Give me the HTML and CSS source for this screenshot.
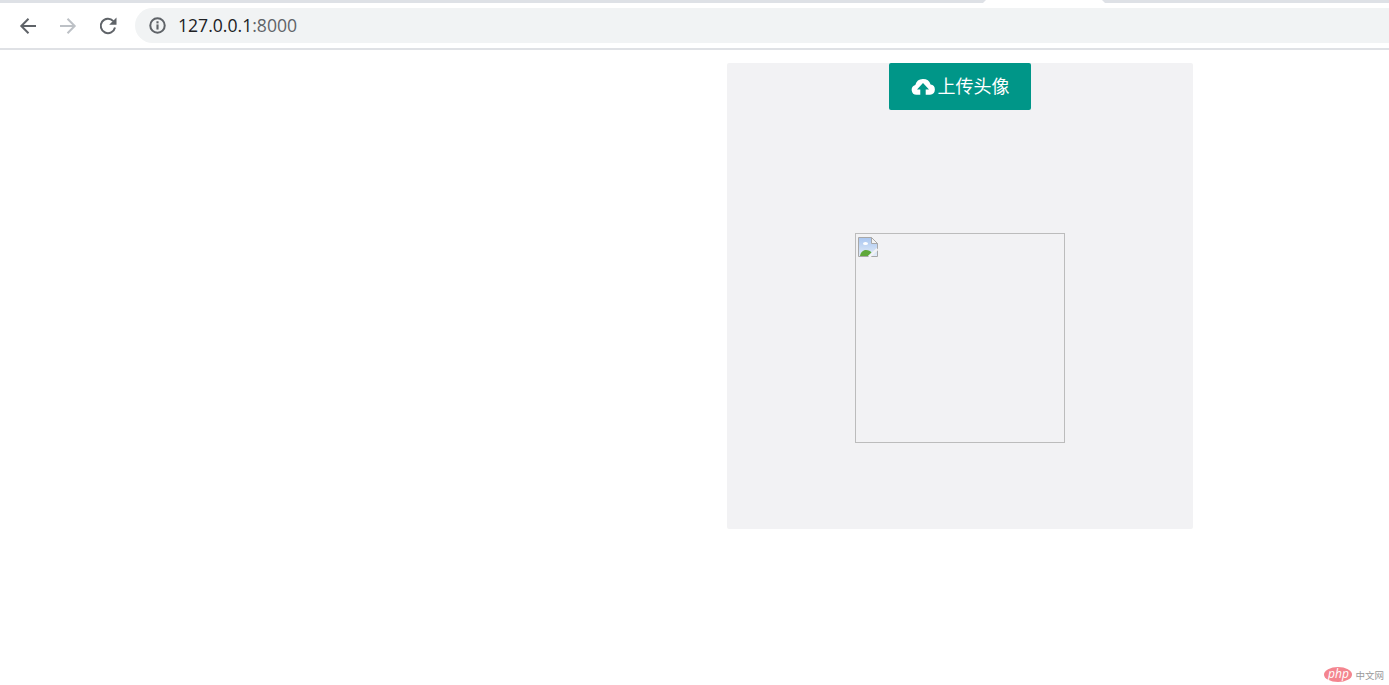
FILE: index.html
```html
<!DOCTYPE html>
<html lang="zh-CN">
<head>
  <meta charset="UTF-8" />
  <title>上传头像</title>
  <link rel="stylesheet" href="styles.css">
</head>
<body>
  <!-- browser chrome -->
  <header class="browser-bar">
    <div class="tab-strip">
      <div class="tab-active"></div>
    </div>
    <div class="toolbar">
      <svg class="nav-icon" viewBox="0 0 20 20"><path d="M18 10H3.500M10.500 2.800L3.300 10l7.200 7.200" fill="none" stroke="#5f6368" stroke-width="2"/></svg>
      <svg class="nav-icon" viewBox="0 0 20 20"><path d="M2 10h14.500M9.500 2.800l7.200 7.200-7.200 7.200" fill="none" stroke="#bdc1c6" stroke-width="2"/></svg>
      <svg class="nav-icon" viewBox="0 0 20 20"><path d="M17 11.500a7.200 7.200 0 1 1-1.700-6.400" fill="none" stroke="#5f6368" stroke-width="2"/><path d="M18.500 1.500v7.300h-7.300z" fill="#5f6368"/></svg>
      <div class="address">
        <svg class="info-icon" viewBox="0 0 16 16"><circle cx="8" cy="8" r="6.800" fill="none" stroke="#5f6368" stroke-width="1.900"/><rect x="7" y="7" width="2" height="4.800" fill="#5f6368"/><rect x="7" y="4" width="2" height="2" fill="#5f6368"/></svg>
        <span class="url">127.0.0.1<span class="url-port">:8000</span></span>
      </div>
    </div>
  </header>

  <main class="page">
    <div class="upload-panel">
      <button type="button" class="upload-btn">
        <svg class="cloud-icon" viewBox="0 0 24 17"><path d="M5.500 16.800A5 5 0 0 1 4.300 7a8 8 0 0 1 15.300-.500 5.200 5.200 0 0 1-.500 10.300h-4.400V11.500h3.300L12 5l-6 6.500h3.300v5.300z" fill="#fff"/></svg>
        <span class="upload-label">上传头像</span>
      </button>
      <div class="avatar">
        <!-- broken image placeholder -->
        <svg class="broken-icon" viewBox="0 0 20 20">
          <defs>
            <linearGradient id="sky" x1="0" y1="0" x2="0" y2="1">
              <stop offset="0" stop-color="#a9c6f0"/>
              <stop offset="1" stop-color="#e4edf8"/>
            </linearGradient>
          </defs>
          <path d="M.500.500h13l6 6v13H.500z" fill="url(#sky)" stroke="#a8a8a8"/>
          <path d="M13.500.500v6h6z" fill="#f4f4f4" stroke="#a8a8a8"/>
          <path d="M5 6.500a2.500 1.500 0 0 1 5 0 2.500 1.500 0 0 1-5 0z" fill="#fff"/>
          <path d="M2 19c.5-3.500 3-6 6-6 2.500 0 4.500 1.200 5.500 2.500L10 19z" fill="#5fa83a"/>
          <path d="M11 20l8.500-8" stroke="#f2f2f4" stroke-width="2.500"/>
        </svg>
      </div>
    </div>
  </main>

  <div class="watermark">
    <span class="php-badge">php</span>
    <span class="php-site">中文网</span>
  </div>
</body>
</html>
```

FILE: styles.css
```css
html, body {
  height: 100%;
}
body {
  margin: 0;
  background: white;
  font-family: "Open Sans", "Noto Sans CJK SC", sans-serif;
  overflow: hidden;
}
.browser-bar {
  height: 50px;
  box-sizing: border-box;
  border-bottom: 2px solid #dfe1e5;
}
.tab-strip {
  height: 3px;
  padding-left: 983px;
  background: #dee1e6;
}
.tab-active {
  width: 122px;
  height: 3px;
  background: white;
  clip-path: polygon(0 100%, 3px 0, calc(100% - 3px) 0, 100% 100%);
}
.toolbar {
  display: flex;
  align-items: center;
  height: 45px;
  padding-left: 18px;
}
.nav-icon {
  width: 20px;
  height: 20px;
  margin-right: 20px;
}
.address {
  display: flex;
  align-items: center;
  flex: 1;
  height: 35px;
  margin-left: -3px;
  padding-left: 14px;
  background: #f1f3f4;
  border-radius: 18px 0 0 18px;
}
.info-icon {
  width: 17px;
  height: 17px;
  margin-right: 12px;
}
.url {
  margin-bottom: 2px;
  font-size: 17.6px;
  color: #202124;
}
.url-port {
  color: #5f6368;
}
.page {
  padding: 13px 0 0 727px;
}
.upload-panel {
  display: flex;
  flex-direction: column;
  align-items: center;
  width: 466px;
  height: 466px;
  background: #f2f2f4;
  border-radius: 2px;
}
.upload-btn {
  display: flex;
  align-items: center;
  justify-content: center;
  gap: 3px;
  width: 142px;
  height: 47px;
  padding: 0;
  background: #009688;
  color: white;
  border: none;
  border-radius: 2px;
  font-family: "Noto Sans CJK SC", sans-serif;
  font-size: 18px;
}
.upload-label {
  margin-bottom: 4px;
}
.cloud-icon {
  width: 24px;
  height: 17px;
}
.avatar {
  width: 210px;
  height: 210px;
  box-sizing: border-box;
  margin-top: 123px;
  padding: 3px 0 0 2px;
  border: 1px solid #bcbcbc;
}
.broken-icon {
  display: block;
  width: 20px;
  height: 20px;
}
.watermark {
  position: absolute;
  right: 5px;
  bottom: 3px;
  display: flex;
  align-items: center;
  gap: 3px;
}
.php-badge {
  width: 28px;
  height: 15px;
  background: #f4858f;
  border-radius: 50%;
  color: white;
  font-size: 12px;
  font-style: italic;
  line-height: 14px;
  text-align: center;
}
.php-site {
  font-size: 9.500px;
  color: #9a9a9a;
}
```
